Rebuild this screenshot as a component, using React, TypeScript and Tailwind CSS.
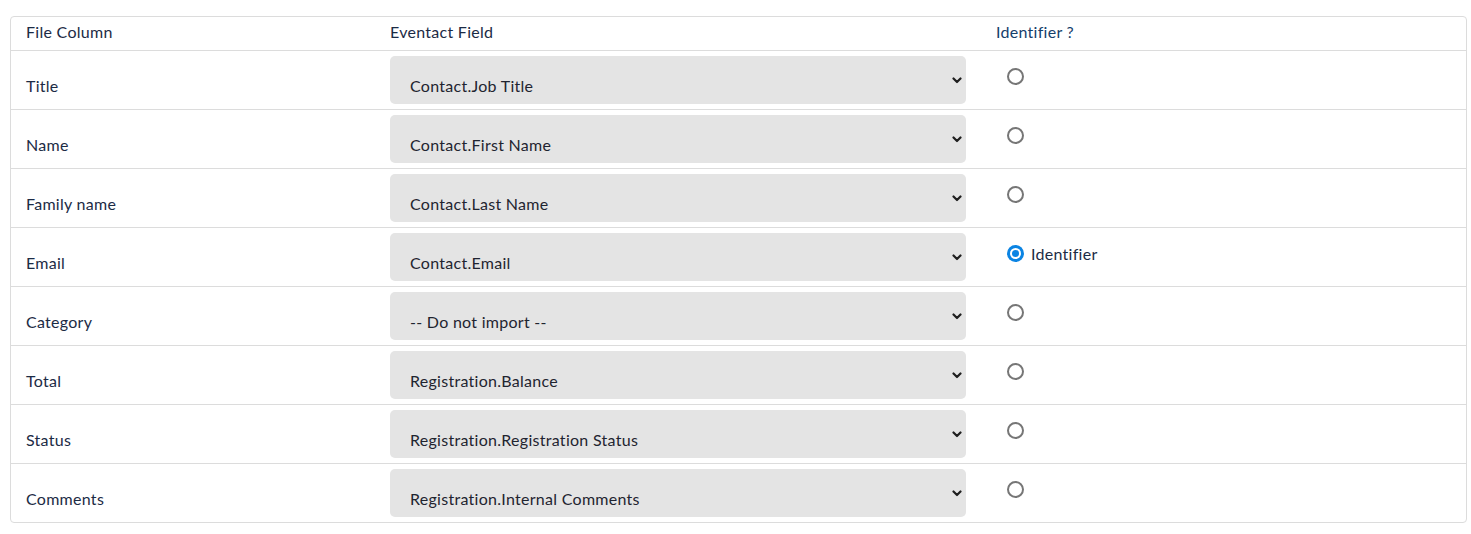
import React from "react";

const rows = [
  { col: "Title", field: "Contact.Job Title", id: false },
  { col: "Name", field: "Contact.First Name", id: false },
  { col: "Family name", field: "Contact.Last Name", id: false },
  { col: "Email", field: "Contact.Email", id: true },
  { col: "Category", field: "-- Do not import --", id: false },
  { col: "Total", field: "Registration.Balance", id: false },
  { col: "Status", field: "Registration.Registration Status", id: false },
  { col: "Comments", field: "Registration.Internal Comments", id: false },
];

const Chevron = () => (
  <svg width="10" height="7" viewBox="0 0 10 7" className="absolute right-[4px] top-[21px]">
    <polyline points="1.5,1.5 5,5 8.5,1.5" fill="none" stroke="#1f1f1f" strokeWidth="2.2" strokeLinecap="round" strokeLinejoin="round" />
  </svg>
);

const Radio = ({ checked }: { checked: boolean }) =>
  checked ? (
    <span className="w-[17px] h-[17px] rounded-full bg-[#0b84e3] flex items-center justify-center">
      <span className="w-[11px] h-[11px] rounded-full bg-white flex items-center justify-center">
        <span className="w-[7px] h-[7px] rounded-full bg-[#0b84e3]" />
      </span>
    </span>
  ) : (
    <span className="w-[17px] h-[17px] rounded-full border-2 border-[#767676] bg-white" />
  );

export default function App() {
  return (
    <div className="bg-white w-[1471px] h-[534px] pt-4 pl-[10px]" style={{ fontFamily: "Lato, 'Open Sans', sans-serif" }}>
      <div className="w-[1457px] border border-[#dcdcdc] rounded-[4px] text-[16px] tracking-[0.28px] text-[#1c2b45]">
        {/* header */}
        <div className="grid grid-cols-[379px_606px_1fr] h-[30px] items-center pb-[3px] border-b border-[#dcdcdc] box-content">
          <div className="pl-[15px]">File Column</div>
          <div>Eventact Field</div>
          <div className="text-[#15406b]">Identifier ?</div>
        </div>

        {rows.map((r, i) => (
          <div
            key={r.col}
            className={`grid grid-cols-[379px_606px_1fr] h-[58px] ${i < rows.length - 1 ? "border-b border-[#dcdcdc]" : ""} box-content`}
          >
            <div className="pl-[15px] pt-[23px] leading-6">{r.col}</div>
            <div className="pt-[5px]">
              <div className="relative w-[576px] h-[48px] bg-[#e4e4e4] rounded-[5px] pl-5 pt-[18px] leading-6 text-[#1f2430]">
                {r.field}
                <Chevron />
              </div>
            </div>
            <div className="pt-[17px] pl-[11px] flex items-start gap-[7px]">
              <Radio checked={r.id} />
              {r.id && <span className="leading-[17px] text-[#1c2b45]">Identifier</span>}
            </div>
          </div>
        ))}
      </div>
    </div>
  );
}
